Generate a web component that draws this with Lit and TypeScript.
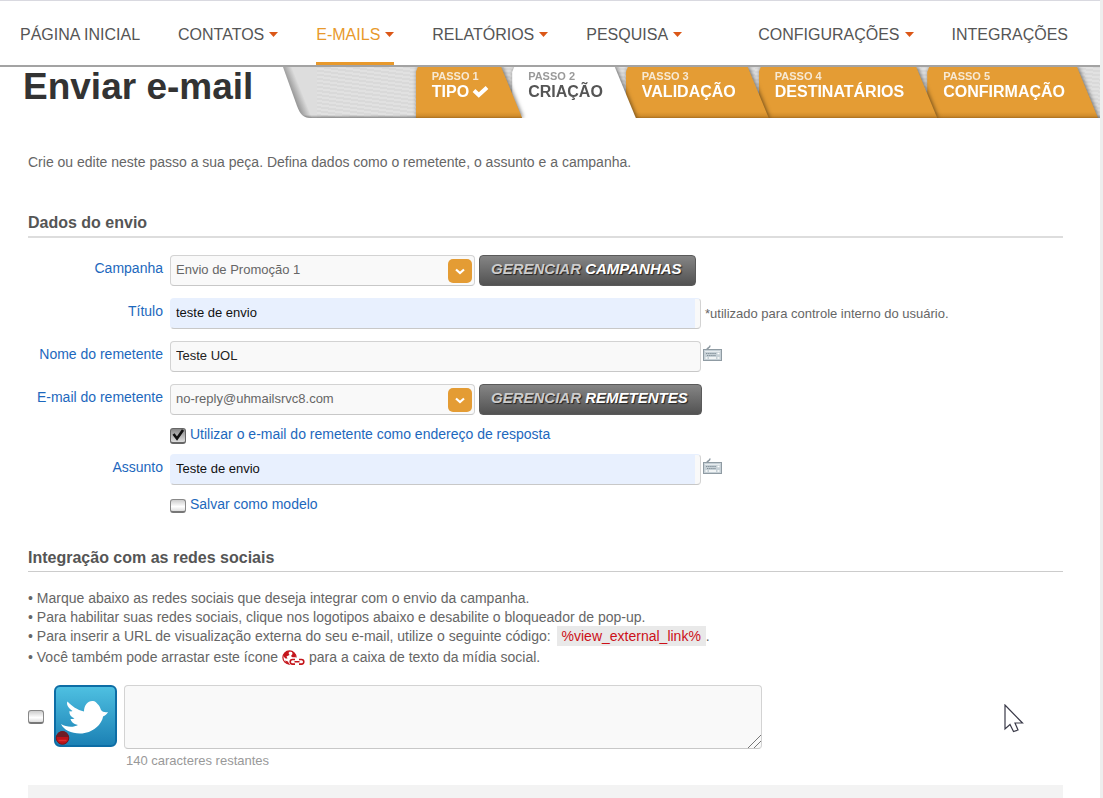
import { LitElement, html, css, svg, nothing } from "lit";
import { customElement, state } from "lit/decorators.js";
import { classMap } from "lit/directives/class-map.js";

interface NavItem { label: string; menu: boolean; active?: boolean; push?: boolean; }
interface Step { name: string; done?: boolean; current?: boolean; }

const NAV: NavItem[] = [
  { label: "PÁGINA INICIAL", menu: false },
  { label: "CONTATOS", menu: true },
  { label: "E-MAILS", menu: true, active: true },
  { label: "RELATÓRIOS", menu: true },
  { label: "PESQUISA", menu: true },
  { label: "CONFIGURAÇÕES", menu: true, push: true },
  { label: "INTEGRAÇÕES", menu: false },
];

const STEPS: Step[] = [
  { name: "TIPO", done: true },
  { name: "CRIAÇÃO", current: true },
  { name: "VALIDAÇÃO" },
  { name: "DESTINATÁRIOS" },
  { name: "CONFIRMAÇÃO" },
];

const keyboardIcon = html`<svg width="19" height="16" viewBox="0 0 19 16" aria-hidden="true">
  <path d="M4 4.500C4 2.500 7 3.500 7 .500" fill="none" stroke="#8d99a1" stroke-width="1.500" />
  <rect x=".5" y="4.5" width="18" height="11" fill="#c6d0d6" stroke="#8f9ba3" />
  <path d="M2 6.5h15" stroke="#e6ebee" />
  <path d="M3 8.5h10M4 10.5h9" stroke="#83919a" stroke-width="1.2" stroke-dasharray="1.4 .7" />
  <path d="M14.5 8.5h2M2.5 13h2M6 13h7M14.5 13h2" stroke="#fff" stroke-width="1.4" />
</svg>`;

@customElement("app-main-nav")
export class AppMainNav extends LitElement {
  static styles = css`
    :host { display: block; }
    .nav {
      display: flex; gap: 38px; height: 65px; padding: 0 32px 0 20px; box-sizing: border-box;
      border-top: 1px solid #d9d9e0; background: #fff;
    }
    .item {
      display: flex; align-items: center; gap: 5px; box-sizing: border-box; padding-top: 6px;
      border-bottom: 3px solid transparent; color: #555; text-decoration: none;
      font-size: 16px; white-space: nowrap;
    }
    .active { color: #e8992c; border-bottom-color: #e8992c; }
    .push { margin-left: auto; }
    .caret { width: 9px; height: 5px; flex: none; }
  `;
  render() {
    return html`<nav class="nav">
      ${NAV.map((n) => html`<a href="#" class=${classMap({ item: true, active: !!n.active, push: !!n.push })}>${n.label}${n.menu
        ? html`<svg class="caret" viewBox="0 0 9 5" aria-hidden="true"><path d="M0 0h9L4.500 5z" fill="#db5717" /></svg>`
        : nothing}</a>`)}
    </nav>`;
  }
}

@customElement("app-steps")
export class AppSteps extends LitElement {
  static styles = css`
    :host { display: block; }
    .head { display: flex; border-top: 2px solid #a3a3a3; height: 53px; box-sizing: border-box; }
    .title {
      margin: 0; padding-left: 23px; width: 260px; flex: none; color: #333;
      font-size: 37px; line-height: 40px; font-weight: bold; white-space: nowrap;
    }
    .edge { flex: none; width: 34px; height: 51px; }
    .bar {
      flex: 1; display: flex; justify-content: flex-end; padding-right: 2px; box-sizing: border-box; overflow: clip;
      background: linear-gradient(#0000 48px, #0002 49px, #8a8a8a 51px), repeating-linear-gradient(8deg, #e1e1e1 0 2px, #d9d9d9 2px 4px);
    }
    .list { display: flex; margin: 0; padding: 0; list-style: none; }
    .step { position: relative; margin-right: -10px; filter: drop-shadow(1px 0 2px #0008); }
    .step:nth-child(1) { z-index: 5; }
    .step:nth-child(2) { z-index: 4; }
    .step:nth-child(3) { z-index: 3; }
    .step:nth-child(4) { z-index: 2; }
    .step:nth-child(5) { z-index: 1; margin-right: 0; }
    .link {
      display: block; box-sizing: border-box; height: 51px; padding: 3px 33px 0 16px; color: #fff;
      text-decoration: none; font-weight: bold; white-space: nowrap;
      background: linear-gradient(#e49c34 0 45px, #d08c2b 49px, #a96f1f 51px);
      clip-path: polygon(0 5px, 2px 0, calc(100% - 21px) 0, 100% 100%, 0 100%);
    }
    .current { background: #fff; color: #555; }
    .over { display: block; font-size: 11px; line-height: 12px; color: #f7e9d4; }
    .current .over { color: #999; }
    .name { display: flex; align-items: center; gap: 3px; font-size: 16px; line-height: 20px; }
  `;
  render() {
    return html`<header class="head">
      <h1 class="title">Enviar e-mail</h1>
      <svg class="edge" viewBox="0 0 34 51" aria-hidden="true">
        <defs>
          <linearGradient id="side" gradientUnits="userSpaceOnUse" x1="8" y1="27" x2="18" y2="23">
            <stop offset="0" stop-color="#8c8c8c" /><stop offset="1" stop-color="#dddddd" />
          </linearGradient>
          <linearGradient id="foot" x1="0" x2="0" y1="0" y2="1">
            <stop offset=".94" stop-color="#000" stop-opacity="0" /><stop offset="1" stop-color="#000" stop-opacity=".35" />
          </linearGradient>
        </defs>
        <path d="M0 0H34V51H28C20 51 17 47 14 39Z" fill="url(#side)" />
        <path d="M0 0H34V51H28C20 51 17 47 14 39Z" fill="url(#foot)" />
      </svg>
      <div class="bar"><ol class="list">
        ${STEPS.map((s, i) => html`<li class="step"><a href="#" class=${classMap({ link: true, current: !!s.current })}>
          <span class="over">PASSO ${i + 1}</span>
          <span class="name">${s.name}${s.done
            ? html`<svg width="17" height="14" viewBox="0 0 17 14" aria-hidden="true"><path d="M2 5.500 6.800 10 15 2.500" fill="none" stroke="#fff" stroke-width="4" /></svg>`
            : nothing}</span></a></li>`)}
      </ol></div>
    </header>`;
  }
}

@customElement("app-root")
export class AppRoot extends LitElement {
  @state() private post = "";

  static styles = css`
    :host {
      display: flex; flex-direction: column; min-height: 100vh; box-sizing: border-box; position: relative;
      border-right: 3px solid #eee; background: #fff; color: #666;
      font-family: "Liberation Sans", Arial, sans-serif; font-size: 14px;
    }
    .main { flex: 1; display: flex; flex-direction: column; padding: 0 37px 0 28px; }
    .intro { margin: 34px 0 0; line-height: 20px; }
    .section { margin: 42px 0 0; padding-bottom: 4px; border-bottom: 2px solid #ddd; font-size: 16px; line-height: 18px; color: #555; }
    .section.second { margin-top: 37px; border-bottom-width: 1px; border-color: #ccc; }
    .form { display: grid; grid-template-columns: 135px 1fr; column-gap: 7px; row-gap: 12px; margin-top: 17px; }
    .label { color: #1d68bd; text-align: right; line-height: 27px; white-space: nowrap; }
    .line { display: flex; align-items: center; height: 31px; }
    .picker { position: relative; width: 305px; margin-right: 4px; }
    .select, .text, .area {
      box-sizing: border-box; border: 1px solid #d3d3d3; border-bottom-color: #c8c8c8; border-radius: 4px;
      background: #f9f9f9; font-family: inherit; font-size: 13px; outline: none;
    }
    .select { display: block; appearance: none; width: 100%; height: 31px; padding: 0 30px 2px 5px; color: #666; }
    .arrow { position: absolute; right: 3px; top: 4px; pointer-events: none; }
    .text { width: 531px; height: 31px; padding: 0 5px 2px; color: #222; }
    .filled { background: linear-gradient(90deg, #e8f0fe calc(100% - 5px), #f9f9f9 calc(100% - 5px)); border-left-color: #e8f0fe; border-top-color: #e8f0fe; color: #111; }
    .btn {
      height: 31px; padding: 0 13px 4px 11px; border: 1px solid #5a5a5a; border-radius: 4px; box-sizing: border-box;
      background: linear-gradient(#858585, #525252); color: #fff; font: italic bold 15px "Liberation Sans", Arial, sans-serif;
      text-shadow: 1px 1px 1px #222; white-space: nowrap;
    }
    .soft { color: #ccc; }
    .hint { margin-left: 4px; font-size: 13px; white-space: nowrap; }
    .key { display: flex; margin-left: 2px; padding: 0 0 8px; border: 0; background: none; }
    .checkline { grid-column: 2; display: flex; align-items: center; height: 15px; gap: 4px; }
    .tick {
      appearance: none; flex: none; width: 16px; height: 14px; margin: 0; border: 1px solid #888; border-bottom: 2px solid #777; border-radius: 3px;
      background: linear-gradient(#ccc, #fff 60%, #ddd); box-sizing: border-box;
    }
    .checkline .tick { margin-top: 3px; }
    .tick:checked {
      height: 16px; border-color: #666;
      background: url("data:image/svg+xml,%3Csvg xmlns='http://www.w3.org/2000/svg' viewBox='0 0 14 13'%3E%3Cpath d='M2.5 5 6 9.5 12 1' fill='none' stroke='%23111' stroke-width='2.6'/%3E%3C/svg%3E") center / 14px 13px no-repeat, linear-gradient(#888, #ddd);
    }
    .name { color: #1d68bd; line-height: 15px; }
    .tips { margin: 17px 0 0; padding: 0; list-style: none; line-height: 19px; }
    .tips .last { display: flex; align-items: center; gap: 4px; height: 23px; }
    .code { padding: 2px 5px; margin-left: 2px; background: #e9e9e9; color: #cc1018; font: inherit; }
    .social { display: grid; grid-template-columns: 16px 63px minmax(0, 639px); column-gap: 8px; margin-top: 16px; align-items: start; }
    .social .tick { margin-top: 25px; }
    .twitter { display: block; padding: 0; border: 0; background: none; margin-left: 2px; }
    .bird { display: block; }
    .area { display: block; width: 100%; height: 64px; resize: none; padding: 5px; }
    .areabox { position: relative; margin-left: 1px; }
    .grip { position: absolute; right: 1px; bottom: 1px; pointer-events: none; }
    .count { grid-column: 3; margin: 3px 0 0 3px; font-size: 13px; line-height: 18px; color: #999; }
    .foot { flex: 1; min-height: 12px; margin-top: 15px; background: #f3f3f3; }
    .pointer { position: absolute; left: 1004px; top: 704px; pointer-events: none; }
  `;

  private picker(id: string, value: string) {
    return html`<div class="picker">
      <select class="select" id=${id}><option>${value}</option></select>
      <svg class="arrow" width="24" height="24" viewBox="0 0 24 24" aria-hidden="true">
        <rect width="24" height="24" rx="5" fill="#e49c34" />
        <path d="M8 10.5 12 14 16 10.5" fill="none" stroke="#fff" stroke-width="2.2" />
      </svg>
    </div>`;
  }

  private twitter() {
    return svg`<svg class="bird" width="63" height="62" viewBox="0 0 63 62" aria-hidden="true">
      <defs><linearGradient id="sky" x1="0" x2="0" y1="0" y2="1">
        <stop offset="0" stop-color="#4fc1e2" /><stop offset="1" stop-color="#1b80b4" /></linearGradient></defs>
      <rect x="1" y="1" width="61" height="60" rx="5" fill="url(#sky)" stroke="#0d6da5" stroke-width="2" />
      <path d="M7 39C12 42 19 43 24 40C19 39 17 36 16.500 34C18 34 19.500 34 20.500 33.500C16.500 31.500 15 29 15.500 26C16.500 26.500 17.500 26.500 18.500 26C14 23 12 19 13.500 16.500C18 21 23 25 30 26.500C30 20 34 15.500 39 16C41 16.200 42.500 17.500 43.500 19C45 20 46 22 47 25C48.500 27 51 27.500 54 27C53 29 51 30.500 49 31.500C48 39 39 48.500 26 48.500C17 48.500 10 45 7 39Z" fill="#fff" />
      <circle cx="8.500" cy="53" r="6.300" fill="#bd1218" stroke="#77151d" />
      <path d="M2.500 52a6 6 0 0 1 12 0z" fill="#6e1d26" />
      <path d="M4.500 55.500h8" stroke="#df2d2d" stroke-width="1.500" />
    </svg>`;
  }

  render() {
    return html`
      <app-main-nav></app-main-nav>
      <app-steps></app-steps>
      <main class="main">
        <p class="intro">Crie ou edite neste passo a sua peça. Defina dados como o remetente, o assunto e a campanha.</p>
        <h2 class="section">Dados do envio</h2>
        <form class="form" @submit=${(e: Event) => e.preventDefault()}>
          <label class="label" for="campaign">Campanha</label>
          <div class="line">${this.picker("campaign", "Envio de Promoção 1")}
            <button class="btn" type="button"><span class="soft">GERENCIAR</span> CAMPANHAS</button></div>
          <label class="label" for="title">Título</label>
          <div class="line"><input class="text filled" id="title" .value=${"teste de envio"} /><span class="hint">*utilizado para controle interno do usuário.</span></div>
          <label class="label" for="sender">Nome do remetente</label>
          <div class="line"><input class="text" id="sender" .value=${"Teste UOL"} /><button class="key" type="button" aria-label="Personalizar">${keyboardIcon}</button></div>
          <label class="label" for="email">E-mail do remetente</label>
          <div class="line">${this.picker("email", "no-reply@uhmailsrvc8.com")}
            <button class="btn" type="button"><span class="soft">GERENCIAR</span> REMETENTES</button></div>
          <div class="checkline"><input class="tick" type="checkbox" id="reply" checked /><label class="name" for="reply">Utilizar o e-mail do remetente como endereço de resposta</label></div>
          <label class="label" for="subject">Assunto</label>
          <div class="line"><input class="text filled" id="subject" .value=${"Teste de envio"} /><button class="key" type="button" aria-label="Personalizar">${keyboardIcon}</button></div>
          <div class="checkline"><input class="tick" type="checkbox" id="model" /><label class="name" for="model">Salvar como modelo</label></div>
        </form>
        <h2 class="section second">Integração com as redes sociais</h2>
        <ul class="tips">
          <li>• Marque abaixo as redes sociais que deseja integrar com o envio da campanha.</li>
          <li>• Para habilitar suas redes sociais, clique nos logotipos abaixo e desabilite o bloqueador de pop-up.</li>
          <li>• Para inserir a URL de visualização externa do seu e-mail, utilize o seguinte código: <code class="code">%view_external_link%</code>.</li>
          <li class="last"><span>• Você também pode arrastar este ícone</span>
            <svg width="23" height="16" viewBox="0 0 23 16" aria-hidden="true">
              <circle cx="7.500" cy="7.500" r="6.600" fill="#fff" stroke="#c4161c" stroke-width="1.200" />
              <path d="M1.500 5C2.500 2 5 .800 8 1L6.500 3 7.500 5 4.500 6.500 5.500 8.500 3.500 8.500 2 7ZM10 1.500l3 2.500 1 4-2.500 .500-2.500-2.500 1.500-2zM3 10.500l3 1 1.500 3C5 14 3.500 12.500 3 10.500z" fill="#c4161c" />
              <g stroke="#fff" stroke-width="4.500" fill="none"><rect x="9" y="9.500" width="6" height="4" rx="2" /><rect x="15.500" y="9.500" width="6" height="4" rx="2" /></g>
              <g stroke="#c4161c" stroke-width="1.600" fill="none"><path d="M13 9.500h-2.500a2.300 2.300 0 0 0 0 4.600H13M17 9.500h2.500a2.300 2.300 0 0 1 0 4.600H17M12.500 11.800h5" /></g>
            </svg>
            <span>para a caixa de texto da mídia social.</span></li>
        </ul>
        <div class="social">
          <input class="tick" type="checkbox" aria-label="Twitter" />
          <button class="twitter" type="button" aria-label="Conectar Twitter">${this.twitter()}</button>
          <div class="areabox">
            <textarea class="area" aria-label="Mensagem" maxlength="140" .value=${this.post}
              @input=${(e: Event) => (this.post = (e.target as HTMLTextAreaElement).value)}></textarea>
            <svg class="grip" width="13" height="13" viewBox="0 0 13 13" aria-hidden="true"><path d="M0 13 13 0M6 13 13 6" stroke="#777" /></svg>
          </div>
          <p class="count">${140 - this.post.length} caracteres restantes</p>
        </div>
        <div class="foot"></div>
      </main>
      <svg class="pointer" width="20" height="29" viewBox="0 0 20 29" aria-hidden="true">
        <path d="M1 1V25L6 20.500 9.500 27.500 14 26 11 19H18.500Z" fill="#fff" stroke="#3a3a48" stroke-width="1.200" />
      </svg>`;
  }
}
